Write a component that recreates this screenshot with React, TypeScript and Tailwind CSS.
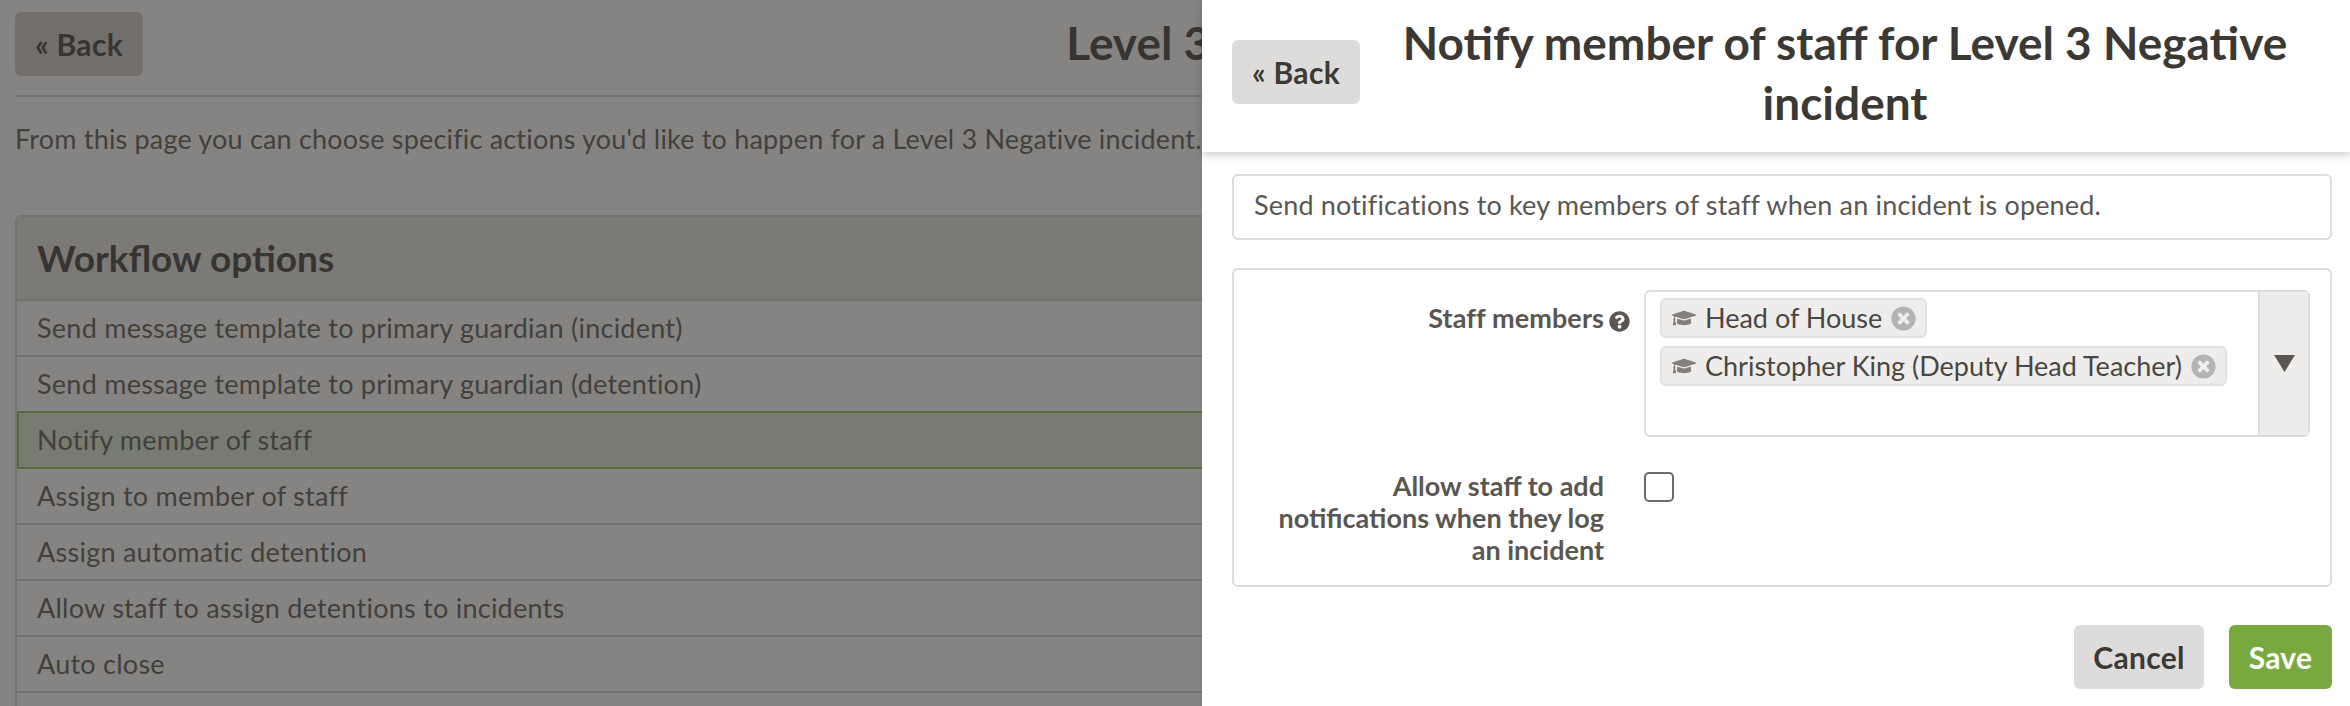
import { FaGraduationCap, FaQuestionCircle, FaTimesCircle } from "react-icons/fa";

const workflowOptions = [
  "Send message template to primary guardian (incident)",
  "Send message template to primary guardian (detention)",
  "Notify member of staff",
  "Assign to member of staff",
  "Assign automatic detention",
  "Allow staff to assign detentions to incidents",
  "Auto close",
  "",
];

function Tag({ label }: { label: string }) {
  return (
    <div className="flex h-[40px] w-fit items-center rounded-[6px] border-2 border-[#e2e1df] bg-[#eeedeb] pl-[10px] pr-[9px]">
      <FaGraduationCap className="h-[24px] w-[24px] text-[#85807c]" />
      <span className="ml-[9px] whitespace-nowrap text-[27px] text-[#4a4642]">{label}</span>
      <FaTimesCircle className="ml-[9px] h-[25px] w-[25px] text-[#b5b3b1]" />
    </div>
  );
}

export default function App() {
  return (
    <div className="relative h-[706px] w-[2350px] overflow-hidden bg-white font-['Lato','Liberation_Sans',sans-serif] text-[#3c3935]">
      {/* page behind the drawer */}
      <div className="px-[15px] pt-[12px]">
        <div className="flex h-[85px] border-b-2 border-[#d4d3d1]">
          <button className="h-[64px] w-[128px] shrink-0 rounded-[6px] bg-[#cfcbc8] text-[30px] font-bold tracking-[0.3px]">
            « Back
          </button>
          <h1 className="flex-1 pr-[6px] pt-[1px] text-center text-[46px] font-bold leading-[60px]">Level 3 Negative</h1>
        </div>
        <p className="mt-[24px] text-[27px] leading-[36px] tracking-[0.19px] text-[#5a5652]">
          From this page you can choose specific actions you'd like to happen for a Level 3 Negative incident.
        </p>
        <div className="mt-[58px] rounded-t-[6px] border-x-2 border-t-2 border-[#d4d3d1]">
          <div className="flex h-[84px] items-center border-b-2 border-[#d4d3d1] bg-[#e6e5e3] px-[20px] text-[37px] font-bold">
            Workflow options
          </div>
          {workflowOptions.map((option) =>
            option === "Notify member of staff" ? (
              <div
                key={option}
                className="relative -mt-[2px] flex h-[58px] items-center border-2 border-[#8fbd4c] bg-[#dee8d2] px-[18px] text-[27px] tracking-[0.25px] text-[#5a5652]"
              >
                {option}
              </div>
            ) : (
              <div
                key={option}
                className="flex h-[56px] items-center border-b-2 border-[#d4d3d1] px-[20px] text-[27px] tracking-[0.25px] text-[#5a5652]"
              >
                {option}
              </div>
            )
          )}
        </div>
      </div>

      <div className="absolute inset-0 bg-[#34322e]/60" />

      {/* notification drawer */}
      <div className="absolute bottom-0 right-0 top-0 w-[1148px] bg-white">
        <div className="flex h-[152px] pl-[30px] pr-[20px] shadow-[0_3px_8px_rgba(0,0,0,0.2)]">
          <div className="pt-[40px]">
            <button className="h-[64px] w-[128px] shrink-0 rounded-[6px] bg-[#dddcda] text-[30px] font-bold tracking-[0.3px]">
              « Back
            </button>
          </div>
          <h2 className="flex-1 pt-[13px] text-center text-[46px] font-bold leading-[60px]">
            Notify member of staff for Level 3 Negative incident
          </h2>
        </div>
        <div className="px-[30px] pt-[22px]">
          <div className="flex h-[66px] w-[1100px] items-center rounded-[6px] border-2 border-[#dddcda] px-[20px] pb-[4px] text-[27px] tracking-[0.17px] text-[#5a5652]">
            Send notifications to key members of staff when an incident is opened.
          </div>
          <div className="mt-[28px] h-[319px] w-[1100px] rounded-[6px] border-2 border-[#dddcda] pb-[18px] pl-[2px] pr-[20px] pt-[20px]">
            <div className="grid grid-cols-[394px_1fr] gap-x-[14px] gap-y-[34px]">
              <div className="flex items-start justify-end pt-[10px]">
                <span className="text-[27px] font-bold leading-[36px] tracking-[0.1px] text-[#5a5652]">Staff members</span>
                <FaQuestionCircle className="ml-[5px] mt-[11px] h-[21px] w-[21px] text-[#5a5652]" />
              </div>
              <div className="flex h-[147px] rounded-[6px] border-2 border-[#dddcda]">
                <div className="flex flex-1 flex-col gap-[8px] px-[14px] pt-[6px]">
                  <Tag label="Head of House" />
                  <Tag label="Christopher King (Deputy Head Teacher)" />
                </div>
                <div className="flex w-[50px] justify-center border-l-2 border-[#dddcda] bg-[#eeedeb] pt-[63px]">
                  <svg width="21" height="17" viewBox="0 0 21 17">
                    <path d="M0 0H21L10.5 17Z" fill="#5a5652" />
                  </svg>
                </div>
              </div>
              <div className="-mt-[1px] pr-[26px] text-right text-[27px] font-bold leading-[32px] text-[#5a5652]">
                Allow staff to add
                <br />
                notifications when they log
                <br />
                an incident
              </div>
              <div className="pt-[1px]">
                <div className="h-[30px] w-[30px] rounded-[5px] border-2 border-[#6b6b6b]" />
              </div>
            </div>
          </div>
          <div className="mt-[38px] flex w-[1100px] justify-end gap-[25px]">
            <button className="h-[64px] w-[130px] rounded-[6px] bg-[#dddcda] text-[30px] font-bold tracking-[0.3px]">
              Cancel
            </button>
            <button className="h-[64px] w-[103px] rounded-[6px] bg-[#78a93f] text-[30px] font-bold tracking-[0.3px] text-white">
              Save
            </button>
          </div>
        </div>
      </div>
    </div>
  );
}
